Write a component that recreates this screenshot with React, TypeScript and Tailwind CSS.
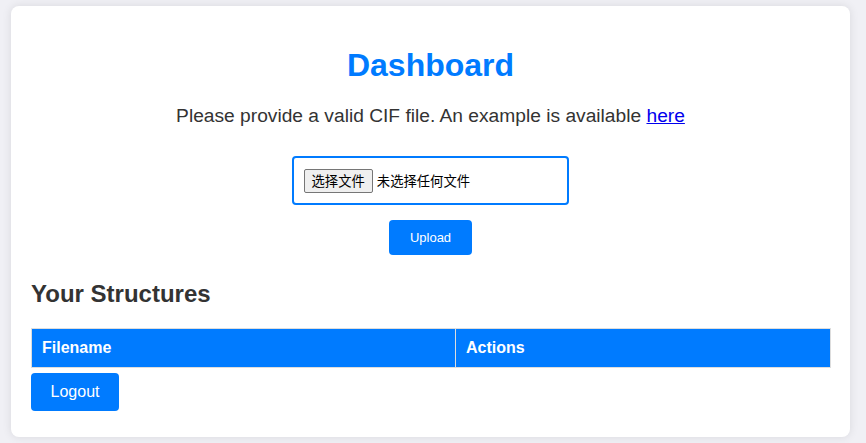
export default function App() {
  return (
    <div className="min-h-screen bg-[#f0f0f5] pt-[6px] pl-[11px] font-['Liberation_Sans',Arial,sans-serif] text-[#333]">
      <div className="w-[839px] rounded-lg bg-white px-5 pt-5 pb-[26px] shadow-[0_0_10px_rgba(0,0,0,0.1)]">
        <h1 className="mt-[21px] mb-[21px] text-center text-[32px] leading-[37px] font-bold text-[#007bff]">Dashboard</h1>
        <p className="text-center text-[19.2px] leading-[22px]">
          Please provide a valid CIF file. An example is available{' '}
          <a href="#" className="text-[#0000ee] underline">here</a>
        </p>

        <form className="mt-[29px] flex flex-col items-center">
          <div className="ml-[-1px] flex h-[49px] w-[277px] items-center rounded border-2 border-[#007bff] px-[10px]">
            <span className="rounded-[2px] border border-[#767676] bg-[#efefef] px-[7px] text-[13.33px] leading-[22px] text-black font-['Noto_Sans_CJK_SC',sans-serif]">
              选择文件
            </span>
            <span className="ml-[4px] text-[13.33px] text-black font-['Noto_Sans_CJK_SC',sans-serif]">未选择任何文件</span>
          </div>
          <button type="button" className="mt-[15px] h-[35px] w-[83px] rounded bg-[#007bff] text-[13px] text-white">
            Upload
          </button>
        </form>

        <h2 className="mt-[25px] text-[24px] leading-[28px] font-bold">Your Structures</h2>

        <table className="mt-5 w-[800px] border-collapse">
          <thead>
            <tr className="bg-[#007bff] text-left text-white">
              <th className="w-[424px] border border-[#ddd] px-[10px] py-[9px] text-[16px] leading-[20px] font-bold">Filename</th>
              <th className="border border-[#ddd] px-[10px] py-[9px] text-[16px] leading-[20px] font-bold">Actions</th>
            </tr>
          </thead>
          <tbody></tbody>
        </table>

        <button type="button" className="mt-[5px] h-[38px] w-[88px] rounded bg-[#007bff] text-[16px] text-white">
          Logout
        </button>
      </div>
    </div>
  )
}
